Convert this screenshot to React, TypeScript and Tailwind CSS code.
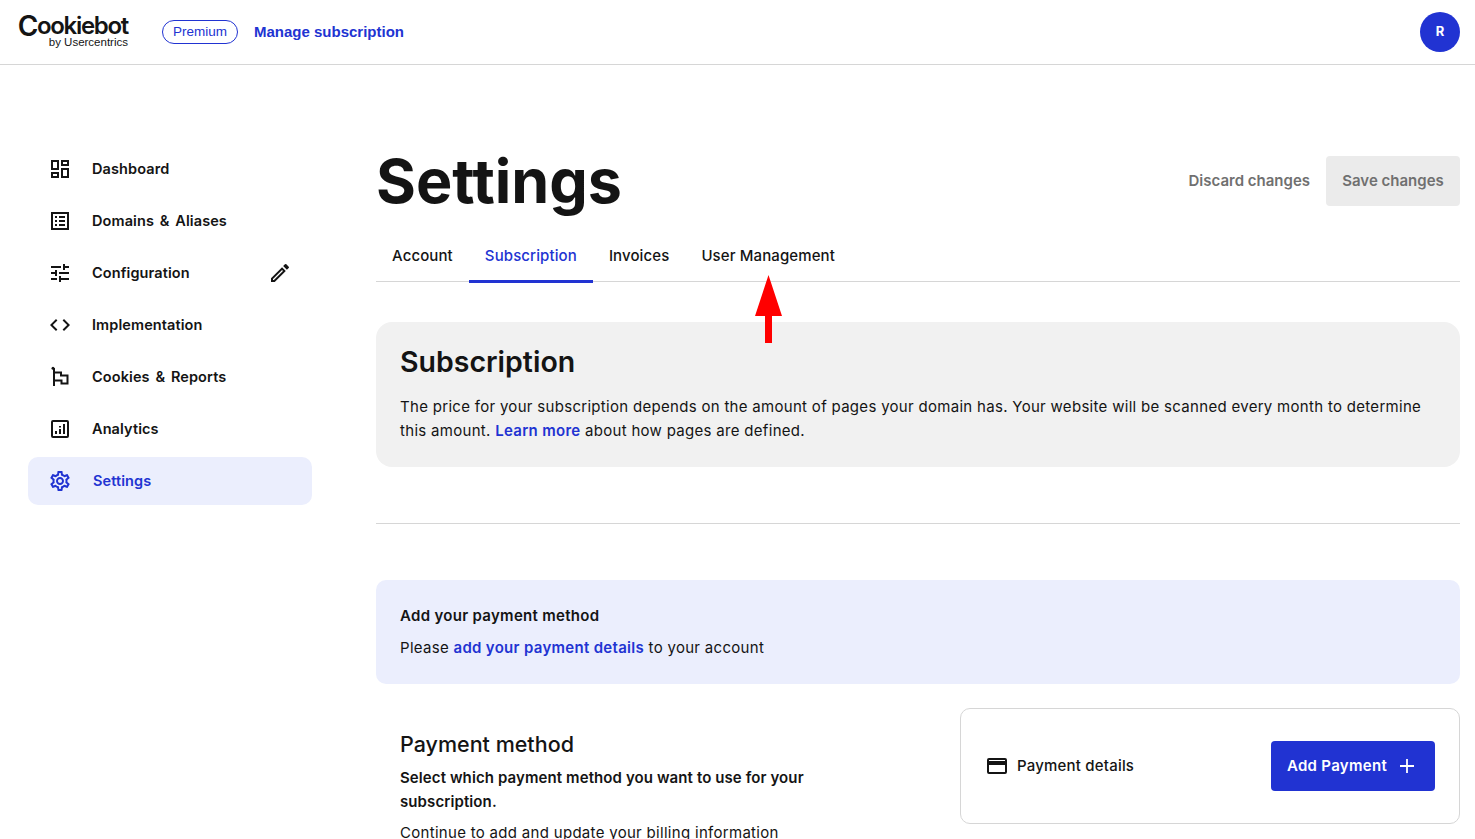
import React from "react";

const font = { fontFamily: "Inter, 'Noto Sans', sans-serif" };

const S = ({ children }: { children: React.ReactNode }) => (
  <svg width="24" height="24" viewBox="0 0 24 24" fill="currentColor" className="shrink-0">{children}</svg>
);

const DashboardIcon = () => (
  <S><path fillRule="evenodd" d="M3 3h8v10H3V3zm2 2v6h4V5H5zM13 3h8v6h-8V3zm2 2v2h4V5h-4zM13 11h8v10h-8V11zm2 2v6h4v-6h-4zM3 15h8v6H3v-6zm2 2v2h4v-2H5z" /></S>
);
const DomainsIcon = () => (
  <S><path fillRule="evenodd" d="M3 3h18v18H3V3zm2 2v14h14V5H5z" /><path d="M7 7h2v2H7zM11 7h6v2h-6zM7 11h2v2H7zM11 11h6v2h-6zM7 15h2v2H7zM11 15h6v2h-6z" /></S>
);
const ConfigIcon = () => (
  <S><path d="M3 17v2h6v-2H3zM3 5v2h10V5H3zm10 16v-2h8v-2h-8v-2h-2v6h2zM7 9v2H3v2h4v2h2V9H7zm14 4v-2H11v2h10zm-6-4h2V7h4V5h-4V3h-2v6z" /></S>
);
const CodeIcon = () => (
  <S><path d="M9.4 16.6 4.8 12l4.6-4.6L8 6l-6 6 6 6 1.4-1.4zm5.2 0 4.6-4.6-4.6-4.6L16 6l6 6-6 6-1.4-1.4z" /></S>
);
const FlagIcon = () => (
  <S>
    <circle cx="5" cy="3.2" r="1.5" />
    <path d="M6 3v18" fill="none" stroke="currentColor" strokeWidth="2" />
    <path d="M6 7.500h7v3h6.500V18.500H13.500v-3H6" fill="none" stroke="currentColor" strokeWidth="2" />
  </S>
);
const AnalyticsIcon = () => (
  <S><path fillRule="evenodd" d="M5 3h14a2 2 0 0 1 2 2v14a2 2 0 0 1-2 2H5a2 2 0 0 1-2-2V5a2 2 0 0 1 2-2zm0 2v14h14V5H5z" /><path d="M7 14h2v3H7zM11 12h2v5h-2zM11 9h2v1.500h-2zM15 7h2v10h-2z" /></S>
);
const GearIcon = () => (
  <S><path d="M19.43 12.98c.04-.32.07-.64.07-.98s-.03-.66-.07-.98l2.11-1.65c.19-.15.24-.42.12-.64l-2-3.46c-.12-.22-.39-.3-.61-.22l-2.49 1c-.52-.4-1.08-.73-1.69-.98l-.38-2.65C14.46 2.18 14.25 2 14 2h-4c-.25 0-.46.18-.49.42l-.38 2.65c-.61.25-1.17.59-1.69.98l-2.49-1c-.23-.09-.49 0-.61.22l-2 3.46c-.13.22-.07.49.12.64l2.11 1.65c-.04.32-.07.65-.07.98s.03.66.07.98l-2.11 1.65c-.19.15-.24.42-.12.64l2 3.46c.12.22.39.3.61.22l2.49-1c.52.4 1.08.73 1.69.98l.38 2.65c.03.24.24.42.49.42h4c.25 0 .46-.18.49-.42l.38-2.65c.61-.25 1.17-.59 1.69-.98l2.49 1c.23.09.49 0 .61-.22l2-3.46c.12-.22.07-.49-.12-.64l-2.11-1.65zm-1.98-1.71c.04.31.05.52.05.73 0 .21-.02.43-.05.73l-.14 1.13.89.7 1.08.84-.7 1.21-1.27-.51-1.04-.42-.9.68c-.43.32-.84.56-1.25.73l-1.06.43-.16 1.13-.2 1.35h-1.4l-.19-1.35-.16-1.13-1.06-.43c-.43-.18-.83-.41-1.23-.71l-.91-.7-1.06.43-1.27.51-.7-1.21 1.08-.84.89-.7-.14-1.13c-.03-.31-.05-.54-.05-.74s.02-.43.05-.73l.14-1.13-.89-.7-1.08-.84.7-1.21 1.27.51 1.04.42.9-.68c.43-.32.84-.56 1.25-.73l1.06-.43.16-1.13.2-1.35h1.39l.19 1.35.16 1.13 1.06.43c.43.18.83.41 1.23.71l.91.7 1.06-.43 1.27-.51.7 1.21-1.07.85-.89.7.14 1.13zM12 8c-2.21 0-4 1.79-4 4s1.79 4 4 4 4-1.79 4-4-1.790-4-4-4zm0 6c-1.100 0-2-.9-2-2s.9-2 2-2 2 .9 2 2-.9 2-2 2z" /></S>
);
const PencilIcon = () => (
  <S><path d="M3 17.25V21h3.750L17.810 9.940l-3.750-3.750L3 17.250zM5.920 19H5v-.920l9.060-9.060.92.920L5.920 19zM20.710 7.040a.996.996 0 0 0 0-1.410l-2.340-2.340a.996.996 0 0 0-1.410 0l-1.830 1.830 3.750 3.750 1.830-1.830z" /></S>
);
const CardIcon = () => (
  <S><path fillRule="evenodd" d="M4 4h16a2 2 0 0 1 2 2v12a2 2 0 0 1-2 2H4a2 2 0 0 1-2-2V6a2 2 0 0 1 2-2zm0 2v1h16V6H4zm0 5v7h16v-7H4z" /></S>
);

const nav = [
  { label: "Dashboard", icon: <DashboardIcon /> },
  { label: "Domains", after: "Aliases", icon: <DomainsIcon /> },
  { label: "Configuration", icon: <ConfigIcon />, edit: true },
  { label: "Implementation", icon: <CodeIcon /> },
  { label: "Cookies", after: "Reports", icon: <FlagIcon /> },
  { label: "Analytics", icon: <AnalyticsIcon /> },
];

export default function App() {
  return (
    <div style={font} className="h-[839px] w-full overflow-hidden bg-white text-[15px] text-[#141414]">
      <header className="flex h-[65px] items-center border-b border-[#d6d6d6] pl-5 pr-[15px]">
        <div className="flex w-[108px] flex-col items-end">
          <span className="flex h-5 -translate-y-[2px] items-baseline text-[24px] font-semibold leading-[20px] tracking-[-1.300px] text-[#141414]">
            <span className="translate-y-[2px] text-[28px] leading-[20px]">C</span>ookiebot
          </span>
          <span className="font-['Liberation_Sans',sans-serif] text-[11.500px] leading-[12px] text-[#141414]">by Usercentrics</span>
        </div>
        <span className="ml-[34px] flex h-6 w-[76px] items-center justify-center rounded-full border border-[#2133d2] font-['Liberation_Sans',sans-serif] text-[13.500px] text-[#2133d2]">Premium</span>
        <a className="ml-4 font-['Liberation_Sans',sans-serif] text-[15px] font-bold text-[#2133d2]">Manage subscription</a>
        <div className="ml-auto flex h-10 w-10 items-center justify-center rounded-full bg-[#2133d2] text-[13px] font-bold text-white">R</div>
      </header>

      <div className="flex">
        <aside className="ml-7 mt-20 flex w-[284px] shrink-0 flex-col gap-1">
          {nav.map((n) => (
            <div key={n.label} className="flex h-12 items-center pl-5 pr-5">
              <span className="mr-[20px] flex text-[#141414]">{n.icon}</span>
              <span className="text-[14.500px] font-semibold tracking-[0.1px]">
                {n.label}
                {n.after && <> <span className="px-[2px]">&amp;</span> {n.after}</>}
              </span>
              {n.edit && <span className="ml-auto flex"><PencilIcon /></span>}
            </div>
          ))}
          <div className="flex h-12 items-center rounded-[10px] bg-[#ebeefd] pl-5 text-[#2133d2]">
            <span className="mr-[21px] flex"><GearIcon /></span>
            <span className="text-[14.500px] font-semibold tracking-[0.1px]">Settings</span>
          </div>
        </aside>

        <main className="ml-16 mt-[91px] w-[1084px] shrink-0">
          <div className="flex items-start justify-between">
            <h1 className="-mt-[1px] text-[61px] font-bold leading-[52px]">Settings</h1>
            <div className="flex items-center gap-4">
              <span className="text-[15px] font-semibold text-[#707070]">Discard changes</span>
              <button className="h-[50px] w-[134px] rounded-[4px] bg-[#ebebeb] text-[15px] font-semibold text-[#707070]">Save changes</button>
            </div>
          </div>

          <div className="relative mt-6 flex h-[51px] border-b border-[#d6d6d6] tracking-[0.11px]">
            {["Account", "Subscription", "Invoices", "User Management"].map((t) => (
              <div
                key={t}
                className={
                  t === "Subscription"
                    ? "flex h-[52px] items-center border-b-[3px] border-[#2133d2] px-4 pt-[1px] text-[15px] font-medium text-[#2133d2]"
                    : "flex h-[50px] items-center px-4 text-[15px] font-medium"
                }
              >
                {t}
              </div>
            ))}
            <svg className="absolute left-[379px] top-[44px] z-10" width="28" height="69" viewBox="0 0 28 69" fill="#ff0000">
              <path d="M13.500 0 27 41H17V68H10V41H0z" />
            </svg>
          </div>

          <section className="mt-10 h-[145px] rounded-2xl bg-[#f1f1f1] px-6 pt-[22px]">
            <h2 className="text-[28.500px] font-semibold leading-9">Subscription</h2>
            <p className="mt-[15px] text-[15px] leading-6 tracking-[0.3px]">
              The price for your subscription depends on the amount of pages your domain has. Your website will be scanned every month to determine this amount. <a className="font-semibold text-[#2133d2]">Learn more</a> about how pages are defined.
            </p>
          </section>

          <hr className="mt-14 border-[#d6d6d6]" />

          <section className="mt-14 h-[104px] rounded-[10px] bg-[#ebeefd] px-6 pt-6">
            <h3 className="text-[15px] font-semibold leading-6 tracking-[0.3px]">Add your payment method</h3>
            <p className="mt-2 text-[15px] leading-6 tracking-[0.3px]">
              Please <a className="font-semibold text-[#2133d2]">add your payment details</a> to your account
            </p>
          </section>

          <div className="mt-6 flex justify-between">
            <div className="w-[460px] pl-6 pt-[20px]">
              <h2 className="text-[21.500px] font-medium leading-8">Payment method</h2>
              <p className="mt-[6px] w-[410px] text-[15px] font-semibold leading-6 tracking-[0.1px]">Select which payment method you want to use for your subscription.</p>
              <p className="mt-[7px] text-[15px] leading-6 tracking-[0.3px]">Continue to add and update your billing information</p>
            </div>
            <div className="flex h-[116px] w-[500px] items-center justify-between rounded-[10px] border border-[#d6d6d6] pl-6 pr-6">
              <div className="flex items-center gap-[8px]">
                <CardIcon />
                <span className="text-[15px] font-medium tracking-[0.2px]">Payment details</span>
              </div>
              <button className="flex h-[50px] w-[164px] items-center justify-center gap-[8px] rounded-[4px] bg-[#2133d2] text-[15px] font-semibold tracking-[0.3px] text-white">
                Add Payment
                <svg width="24" height="24" viewBox="0 0 24 24" fill="none" stroke="currentColor" strokeWidth="1.800"><path d="M12 5v14M5 12h14" /></svg>
              </button>
            </div>
          </div>
        </main>
      </div>
    </div>
  );
}
